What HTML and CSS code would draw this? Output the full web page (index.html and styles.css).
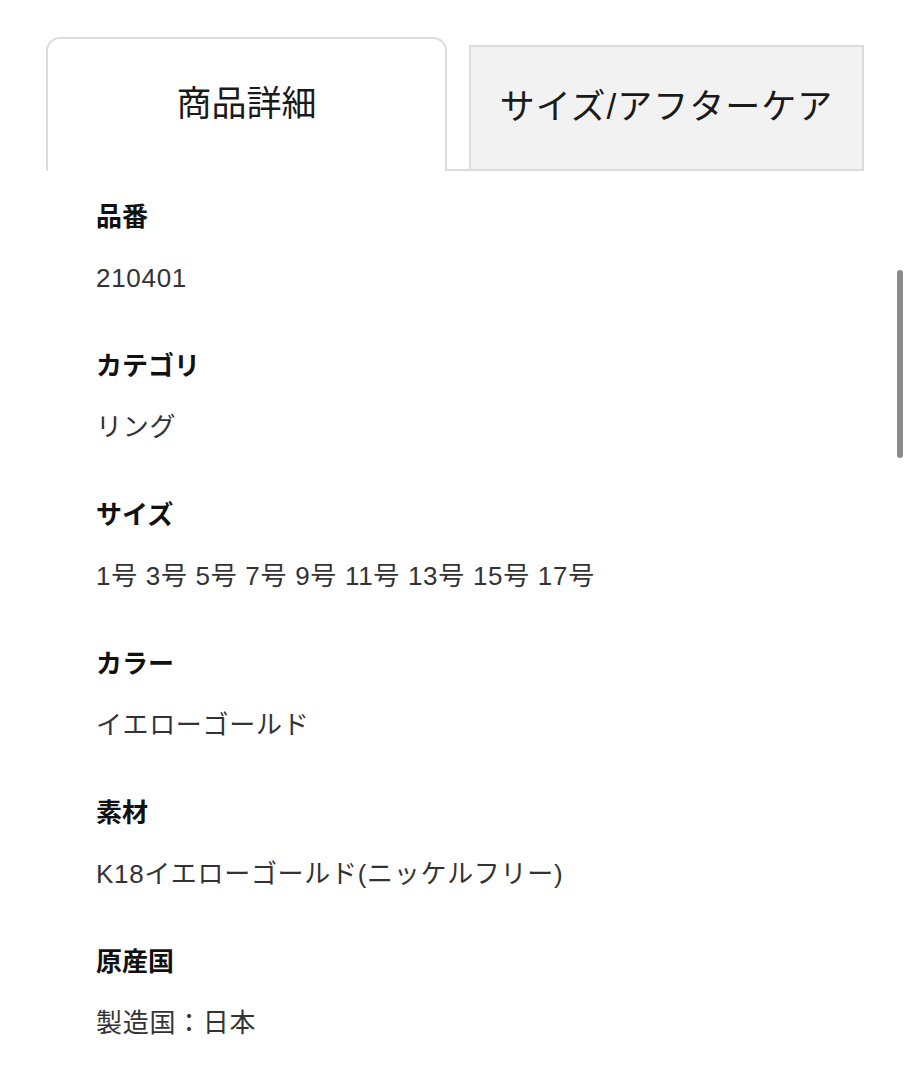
FILE: index.html
```html
<!DOCTYPE html>
<html lang="ja">
<head>
  <meta charset="UTF-8">
  <meta name="viewport" content="width=device-width, initial-scale=1.0">
  <title>商品詳細</title>
  <link rel="stylesheet" href="styles.css">
</head>
<body>

  <div class="tabs">
    <div class="tab active">商品詳細</div>
    <div class="tab-gap"></div>
    <div class="tab">サイズ/アフターケア</div>
  </div>

  <dl class="spec">
    <div class="spec-item">
      <dt>品番</dt>
      <dd>210401</dd>
    </div>
    <div class="spec-item">
      <dt>カテゴリ</dt>
      <dd>リング</dd>
    </div>
    <div class="spec-item">
      <dt>サイズ</dt>
      <dd>1号 3号 5号 7号 9号 11号 13号 15号 17号</dd>
    </div>
    <div class="spec-item">
      <dt>カラー</dt>
      <dd>イエローゴールド</dd>
    </div>
    <div class="spec-item">
      <dt>素材</dt>
      <dd>K18イエローゴールド(ニッケルフリー)</dd>
    </div>
    <div class="spec-item">
      <dt>原産国</dt>
      <dd>製造国：日本</dd>
    </div>
  </dl>

  <div class="scrollbar"></div>

</body>
</html>
```

FILE: styles.css
```css
body {
  margin: 0;
  background-color: #fff;
  font-family: "Liberation Sans", "Noto Sans CJK JP", sans-serif;
  color: #222;
  position: relative;
  height: 1080px;
  overflow: hidden;
}

.tabs {
  display: flex;
  align-items: flex-end;
  margin: 37px 0 0 46px;
  width: 818px;
}

.tab {
  box-sizing: border-box;
  display: flex;
  justify-content: center;
  align-items: center;
  font-size: 35px;
  color: #1a1a1a;
  border: 2px solid #dcdcdc;
  padding-bottom: 10px;
}

.tab.active {
  width: 401px;
  height: 134px;
  border-bottom: none;
  border-radius: 14px 14px 0 0;
  background-color: #fff;
}

.tab-gap {
  width: 22px;
  border-bottom: 2px solid #dcdcdc;
}

.tab:not(.active) {
  width: 395px;
  height: 126px;
  background-color: #f2f2f2;
  letter-spacing: 1px;
}

.spec {
  margin: 26px 0 0 96px;
  padding: 0;
}

.spec-item {
  margin-bottom: 48px;
}

.spec dt {
  font-size: 26px;
  line-height: 40px;
  font-weight: bold;
  color: #111;
}

.spec dd {
  margin: 21px 0 0;
  font-size: 26px;
  line-height: 40px;
  color: #333;
  letter-spacing: 0.7px;
}

.scrollbar {
  position: absolute;
  left: 897px;
  top: 270px;
  width: 6px;
  height: 188px;
  border-radius: 3px;
  background-color: #8a8a8a;
}
```
